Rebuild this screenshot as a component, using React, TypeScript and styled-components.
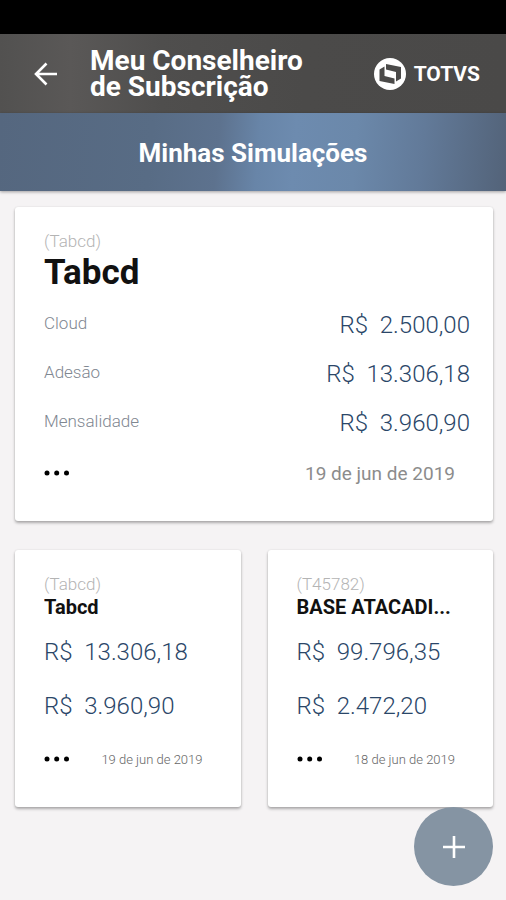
import React from "react";
import styled, { createGlobalStyle } from "styled-components";

const GlobalStyle = createGlobalStyle`
  * { box-sizing: border-box; }
  body { margin: 0; background: #f5f3f4; font-family: Roboto, "Liberation Sans", sans-serif; }
  h1, h2, h3, p, dl, dd, dt { margin: 0; font-weight: inherit; }
  button { border: 0; padding: 0; background: none; color: inherit; font: inherit; cursor: pointer; }
`;

const Screen = styled.div`
  min-height: 100vh;
  display: flex;
  flex-direction: column;
`;

const StatusBar = styled.div`
  height: 34px;
  background: #000;
`;

const AppBar = styled.header`
  display: flex;
  align-items: center;
  height: 79px;
  padding: 0 26px 0 30px;
  color: #fff;
  background: linear-gradient(90deg, #525150 0%, #5a5857 14%, #4f4e4d 32%, #4b4a49 60%, #4a4948 100%);
`;

const BackButton = styled.button`
  display: flex;
  width: 32px;
  margin-right: 28px;
`;

const AppTitle = styled.h1`
  flex: 1;
  font-size: 28px;
  line-height: 26px;
  font-weight: 700;
`;

const Brand = styled.div`
  display: flex;
  align-items: center;
  gap: 8px;
  font-size: 21px;
  line-height: 32px;
  font-weight: 700;
`;

const Banner = styled.div`
  display: flex;
  align-items: center;
  justify-content: center;
  height: 78px;
  padding-top: 2px;
  color: #fff;
  background: linear-gradient(95deg, #55677f 0%, #586c85 30%, #5d728e 43%, #6885a8 51%, #6d8baf 58%, #6b88aa 70%, #627a99 83%, #536379 100%);
  box-shadow: 0 1px 3px rgba(0, 0, 0, 0.35);
`;

const BannerTitle = styled.h2`
  font-size: 26px;
  line-height: 32px;
  font-weight: 700;
`;

const Content = styled.main`
  display: grid;
  grid-template-columns: minmax(0, 1fr) minmax(0, 1fr);
  gap: 29px 27px;
  padding: 16px 13px 16px 15px;
`;

const Card = styled.article<{ $wide?: boolean }>`
  grid-column: ${(p) => (p.$wide ? "1 / -1" : "auto")};
  padding: ${(p) => (p.$wide ? "24px 23px 35px 29px" : "24px 29px 35px 29px")};
  background: #fff;
  border-radius: 3px;
  box-shadow: 0 2px 3px rgba(0, 0, 0, 0.3), 0 0 2px rgba(0, 0, 0, 0.1);
`;

const Code = styled.p`
  font-size: 17px;
  line-height: 20px;
  font-weight: 300;
  color: #b4b4b4;
`;

const CardTitle = styled.h3<{ $large?: boolean }>`
  overflow: hidden;
  text-overflow: ellipsis;
  white-space: nowrap;
  color: #111;
  font-weight: 700;
  font-size: ${(p) => (p.$large ? 35 : 20)}px;
  line-height: ${(p) => (p.$large ? 44 : 26)}px;
`;

const Fees = styled.dl`
  padding: 10px 0;
`;

const Fee = styled.div`
  display: flex;
  justify-content: space-between;
  height: 49px;
`;

const FeeName = styled.dt`
  font-size: 17px;
  font-weight: 300;
  line-height: 36px;
  color: #7f8791;
`;

const FeeValue = styled.dd`
  font-size: 24px;
  font-weight: 300;
  line-height: 40px;
  color: #2a4668;
  white-space: pre;
`;

const Amounts = styled.div`
  padding: 12px 0 8px;
`;

const Amount = styled.p`
  height: 54px;
  font-size: 24px;
  font-weight: 300;
  line-height: 40px;
  color: #2a4668;
  white-space: pre;
`;

const CardFooter = styled.footer<{ $wide?: boolean }>`
  display: flex;
  align-items: center;
  justify-content: space-between;
  height: 24px;
  padding-right: ${(p) => (p.$wide ? 15 : 9)}px;
`;

const MoreButton = styled.button`
  display: flex;
  padding-bottom: 3px;
`;

const DateText = styled.time<{ $large?: boolean }>`
  font-size: ${(p) => (p.$large ? 19 : 13)}px;
  font-weight: ${(p) => (p.$large ? 400 : 300)};
  line-height: 24px;
  color: ${(p) => (p.$large ? "#8c8c8c" : "#666")};
`;

const AddButton = styled.button`
  position: fixed;
  right: 13px;
  bottom: 14px;
  display: flex;
  align-items: center;
  justify-content: center;
  width: 79px;
  height: 79px;
  border-radius: 50%;
  background: #8594a3;
`;

function ArrowIcon() {
  return (
    <svg width="32" height="24" viewBox="0 0 32 24" fill="none" stroke="#fff" strokeWidth="2.6">
      <path d="M27 12H6.5M16.5 1.5 6 12l10.500 10.500" />
    </svg>
  );
}

function BrandMark() {
  return (
    <svg width="32" height="32" viewBox="0 0 32 32" aria-hidden="true">
      <circle cx="16" cy="16" r="16" fill="#fff" />
      <path d="M12 6 27 9v11.500L22 23.500v-9.500L12 11.500z" fill="#4b4a49" />
      <path d="M20.500 26 5.500 23V11.500L10.500 8.500v9.500L20.500 20.500z" fill="#4b4a49" />
    </svg>
  );
}

function More() {
  return (
    <MoreButton aria-label="Mais opções">
      <svg width="26" height="6" viewBox="0 0 26 6" fill="#000">
        <circle cx="3" cy="3" r="2.500" />
        <circle cx="12.700" cy="3" r="2.500" />
        <circle cx="22.500" cy="3" r="2.500" />
      </svg>
    </MoreButton>
  );
}

const fees = [
  { name: "Cloud", value: "2.500,00" },
  { name: "Adesão", value: "13.306,18" },
  { name: "Mensalidade", value: "3.960,90" },
];

const simulations = [
  { code: "Tabcd", title: "Tabcd", amounts: ["13.306,18", "3.960,90"], date: "19 de jun de 2019" },
  { code: "T45782", title: "BASE ATACADI...", amounts: ["99.796,35", "2.472,20"], date: "18 de jun de 2019" },
];

export default function App() {
  return (
    <Screen>
      <GlobalStyle />
      <StatusBar />
      <AppBar>
        <BackButton aria-label="Voltar">
          <ArrowIcon />
        </BackButton>
        <AppTitle>
          Meu Conselheiro
          <br />
          de Subscrição
        </AppTitle>
        <Brand>
          <BrandMark />
          TOTVS
        </Brand>
      </AppBar>
      <Banner>
        <BannerTitle>Minhas Simulações</BannerTitle>
      </Banner>
      <Content>
        <Card $wide>
          <Code>(Tabcd)</Code>
          <CardTitle $large>Tabcd</CardTitle>
          <Fees>
            {fees.map((fee) => (
              <Fee key={fee.name}>
                <FeeName>{fee.name}</FeeName>
                <FeeValue>{`R$  ${fee.value}`}</FeeValue>
              </Fee>
            ))}
          </Fees>
          <CardFooter $wide>
            <More />
            <DateText $large>19 de jun de 2019</DateText>
          </CardFooter>
        </Card>
        {simulations.map((item) => (
          <Card key={item.code}>
            <Code>({item.code})</Code>
            <CardTitle>{item.title}</CardTitle>
            <Amounts>
              {item.amounts.map((amount) => (
                <Amount key={amount}>{`R$  ${amount}`}</Amount>
              ))}
            </Amounts>
            <CardFooter>
              <More />
              <DateText>{item.date}</DateText>
            </CardFooter>
          </Card>
        ))}
      </Content>
      <AddButton aria-label="Nova simulação">
        <svg width="22" height="22" viewBox="0 0 22 22" stroke="#fff" strokeWidth="2.6">
          <path d="M11 0v22M0 11h22" />
        </svg>
      </AddButton>
    </Screen>
  );
}
